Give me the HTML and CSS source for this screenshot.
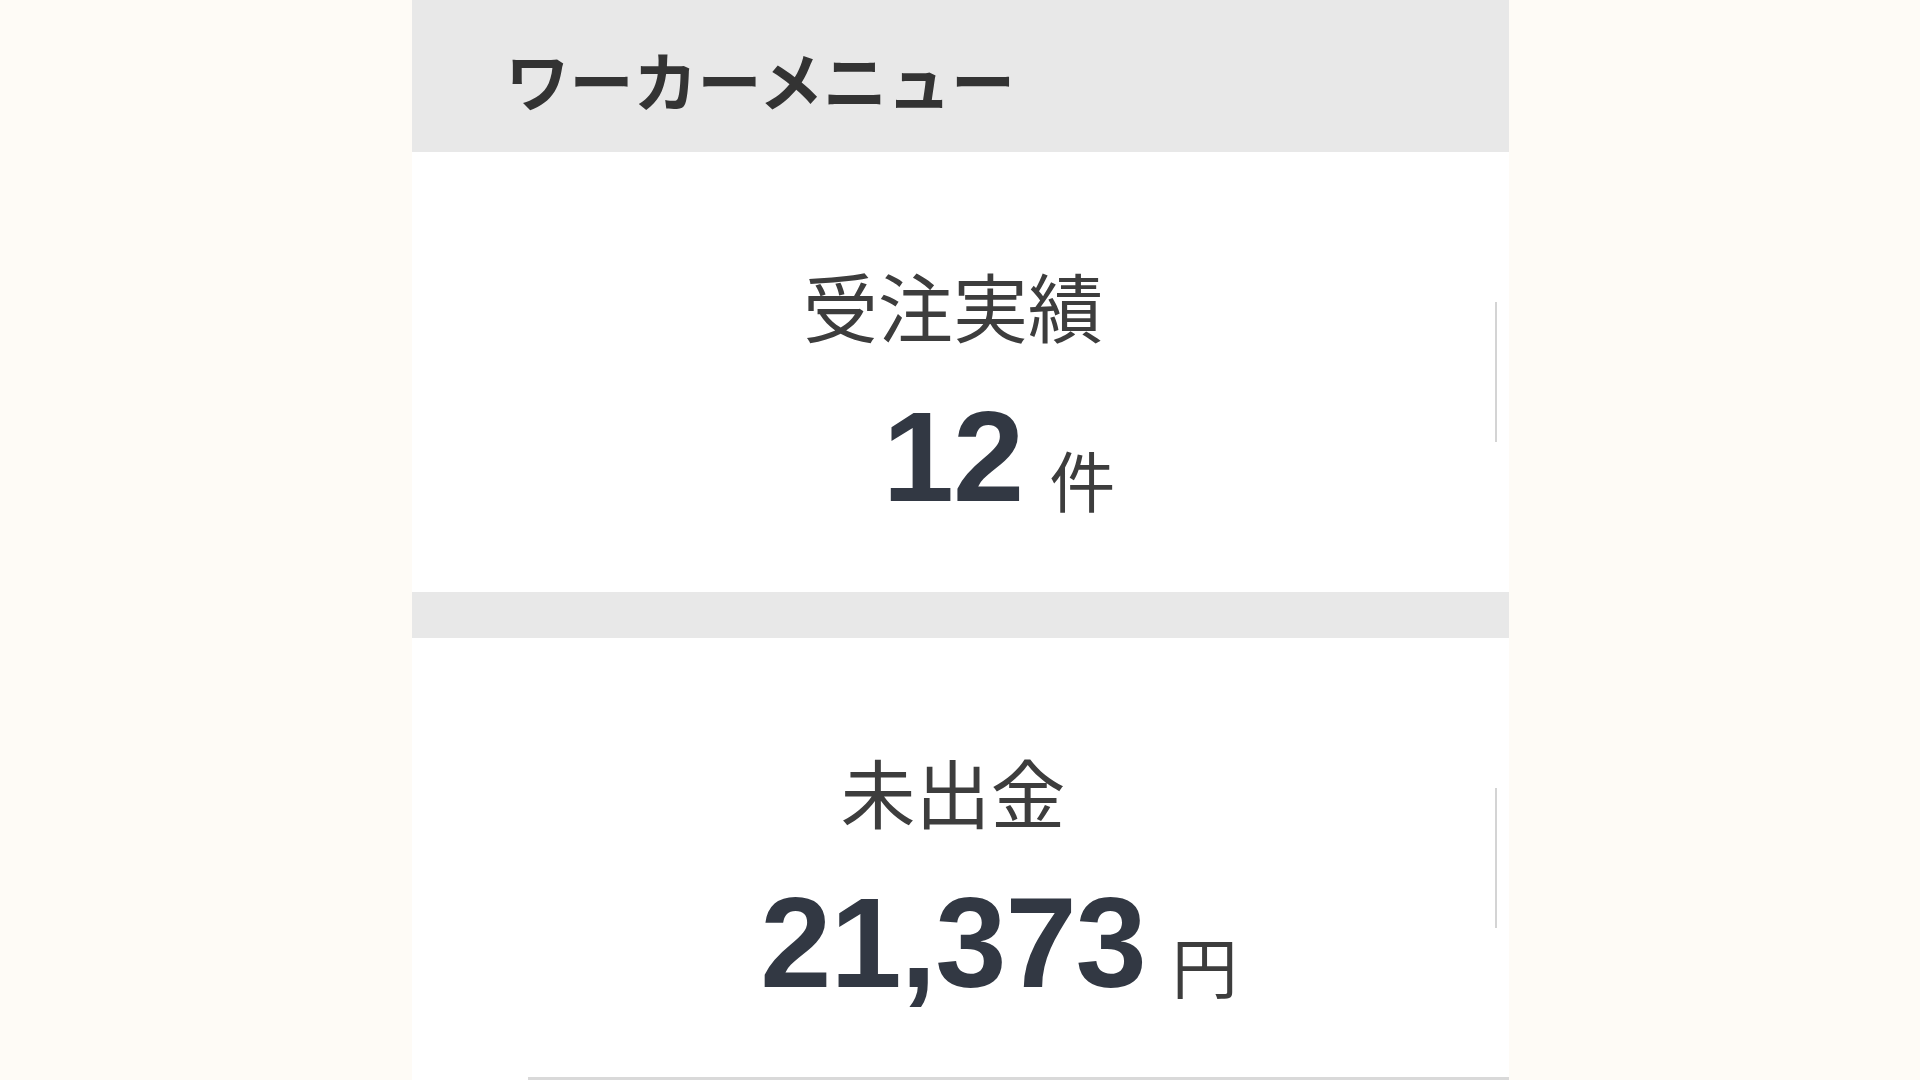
FILE: index.html
```html
<!DOCTYPE html>
<html lang="ja">
<head>
<meta charset="utf-8">
<title>ワーカーメニュー</title>
<link rel="stylesheet" href="styles.css">
</head>
<body>
<div class="panel">
  <div class="header"><h2 class="header-title">ワーカーメニュー</h2></div>
  <div class="stat">
    <div class="stat-body">
      <div class="stat-label">受注実績</div>
      <div class="stat-value"><span class="num">12</span><span class="unit">件</span></div>
    </div>
    <div class="divider"></div>
  </div>
  <div class="band"></div>
  <div class="stat stat-last">
    <div class="stat-body">
      <div class="stat-label">未出金</div>
      <div class="stat-value"><span class="num">21,373</span><span class="unit">円</span></div>
    </div>
    <div class="divider"></div>
  </div>
  <div class="next-row"></div>
</div>
</body>
</html>
```
FILE: styles.css
```css
html, body {
  margin: 0;
  padding: 0;
  background: #fefbf6;
  height: 100%;
  overflow: hidden;
}
body {
  font-family: "Noto Sans CJK JP", "Noto Sans JP", "Noto Sans CJK SC", "Source Han Sans JP", sans-serif;
}
.panel {
  width: 1097px;
  margin: 0 auto;
  background: #ffffff;
  min-height: 1100px;
}
.header {
  height: 152px;
  background: #e8e8e8;
  display: flex;
  align-items: center;
  padding-left: 94px;
  box-sizing: border-box;
}
.header-title {
  margin: 0;
  font-family: "Noto Sans CJK JP", "Noto Sans JP", "Noto Sans CJK SC", sans-serif;
  font-size: 64px;
  line-height: 1;
  font-weight: 700;
  color: #333333;
  padding-top: 4px;
}
.stat {
  height: 440px;
  display: flex;
  box-sizing: border-box;
}
.stat-last {
  height: 439px;
}
.stat-body {
  flex: 1;
  padding-top: 115px;
  display: flex;
  flex-direction: column;
  align-items: stretch;
}
.stat-label {
  text-align: center;
  font-size: 75px;
  line-height: 1;
  color: #3d3d3d;
  font-weight: 400;
}
.stat-value {
  margin-top: 51px;
  display: grid;
  grid-template-columns: 1fr auto 1fr;
  align-items: baseline;
}
.num {
  grid-column: 2;
  font-family: "Liberation Sans", Arial, sans-serif;
  font-weight: 700;
  font-size: 128px;
  line-height: 1;
  color: #323843;
  letter-spacing: -1px;
}
.unit {
  grid-column: 3;
  justify-self: start;
  margin-left: 26px;
  font-size: 66px;
  line-height: 1;
  color: #3d3d3d;
  position: relative;
  top: 6px;
}
.divider {
  align-self: center;
  width: 2px;
  height: 140px;
  background: #d4d4d4;
  margin-right: 12px;
}
.band {
  height: 46px;
  background: #e8e8e8;
}
.next-row {
  margin-left: 116px;
  border-top: 3px solid #d9d9d9;
  height: 60px;
}
```
